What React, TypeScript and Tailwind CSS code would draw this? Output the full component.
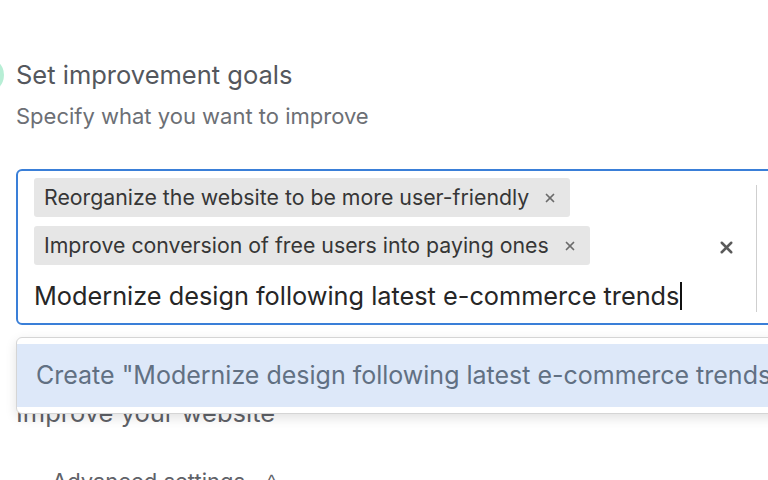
import { X } from 'lucide-react';

function Chip({ label }: { label: string }) {
  return (
    <div className="flex h-[39px] items-center gap-[14px] rounded-[3px] bg-[#e6e6e6] pl-[10px] pr-[13px]">
      <span className="text-[21.3px] leading-none text-[#363636]">{label}</span>
      <X size={14} strokeWidth={3} className="text-[#6b6b6b]" />
    </div>
  );
}

export default function App() {
  return (
    <div
      className="relative h-[480px] w-[768px] overflow-hidden bg-white"
      style={{ fontFamily: 'Inter, "Noto Sans", sans-serif' }}
    >
      <div className="w-[900px] pl-4 pt-[57px]">
        <div className="flex items-center">
          <div className="-ml-[48px] mr-[12px] h-[36px] w-[36px] shrink-0 rounded-full bg-[#b7eed5]" />
          <h2 className="text-[25.5px] leading-[30px] text-[#54575d]">Set improvement goals</h2>
        </div>
        <p className="mt-[8px] text-[22px] leading-[30px] text-[#6c6f75]">
          Specify what you want to improve
        </p>

        <div className="mt-[38px] flex w-[800px] rounded-[6px] border-2 border-[#3a7fd8] pl-4">
          <div className="flex flex-1 flex-col items-start gap-[9px] pb-[11px] pt-[7px]">
            <Chip label="Reorganize the website to be more user-friendly" />
            <Chip label="Improve conversion of free users into paying ones" />
            <div className="mt-[6px] flex h-[32px] items-center">
              <span className="whitespace-nowrap text-[25.3px] leading-none text-[#262626]">
                Modernize design following latest e-commerce trends
              </span>
              <span className="ml-[1px] h-[28px] w-[2px] bg-[#111]" />
            </div>
          </div>
          <div className="flex w-[40px] items-center justify-center">
            <X size={19} strokeWidth={3.2} className="text-[#5a5a5a]" />
          </div>
          <div className="ml-[10px] mb-[11px] mt-[14px] w-px bg-[#cfcfcf]" />
          <div className="w-[57px]" />
        </div>

        <p className="mt-[72px] text-[25.5px] leading-[32px] text-[#5f6268]">Improve your website</p>

        <div className="mt-[38px] flex h-[28px] items-center">
          <div className="ml-[12px] h-px w-[18px] bg-[#e3e3e3]" />
          <span className="ml-[6px] text-[22px] leading-none text-[#5f6268]">Advanced settings</span>
          <span className="ml-[22px] text-[18px] leading-none text-[#5f6268]">^</span>
          <div className="ml-[36px] h-px flex-1 bg-[#e3e3e3]" />
        </div>
      </div>

      <div className="absolute left-4 top-[337px] w-[820px] rounded-[6px] border border-[#d5d5d5] bg-white py-[6px] shadow-[0_4px_12px_rgba(0,0,0,0.12)]">
        <div className="flex h-[63px] items-center bg-[#dde8f9] pl-[19px]">
          <span className="whitespace-nowrap text-[25px] leading-none text-[#617083]">
            Create "Modernize design following latest e-commerce trends"
          </span>
        </div>
      </div>
    </div>
  );
}
